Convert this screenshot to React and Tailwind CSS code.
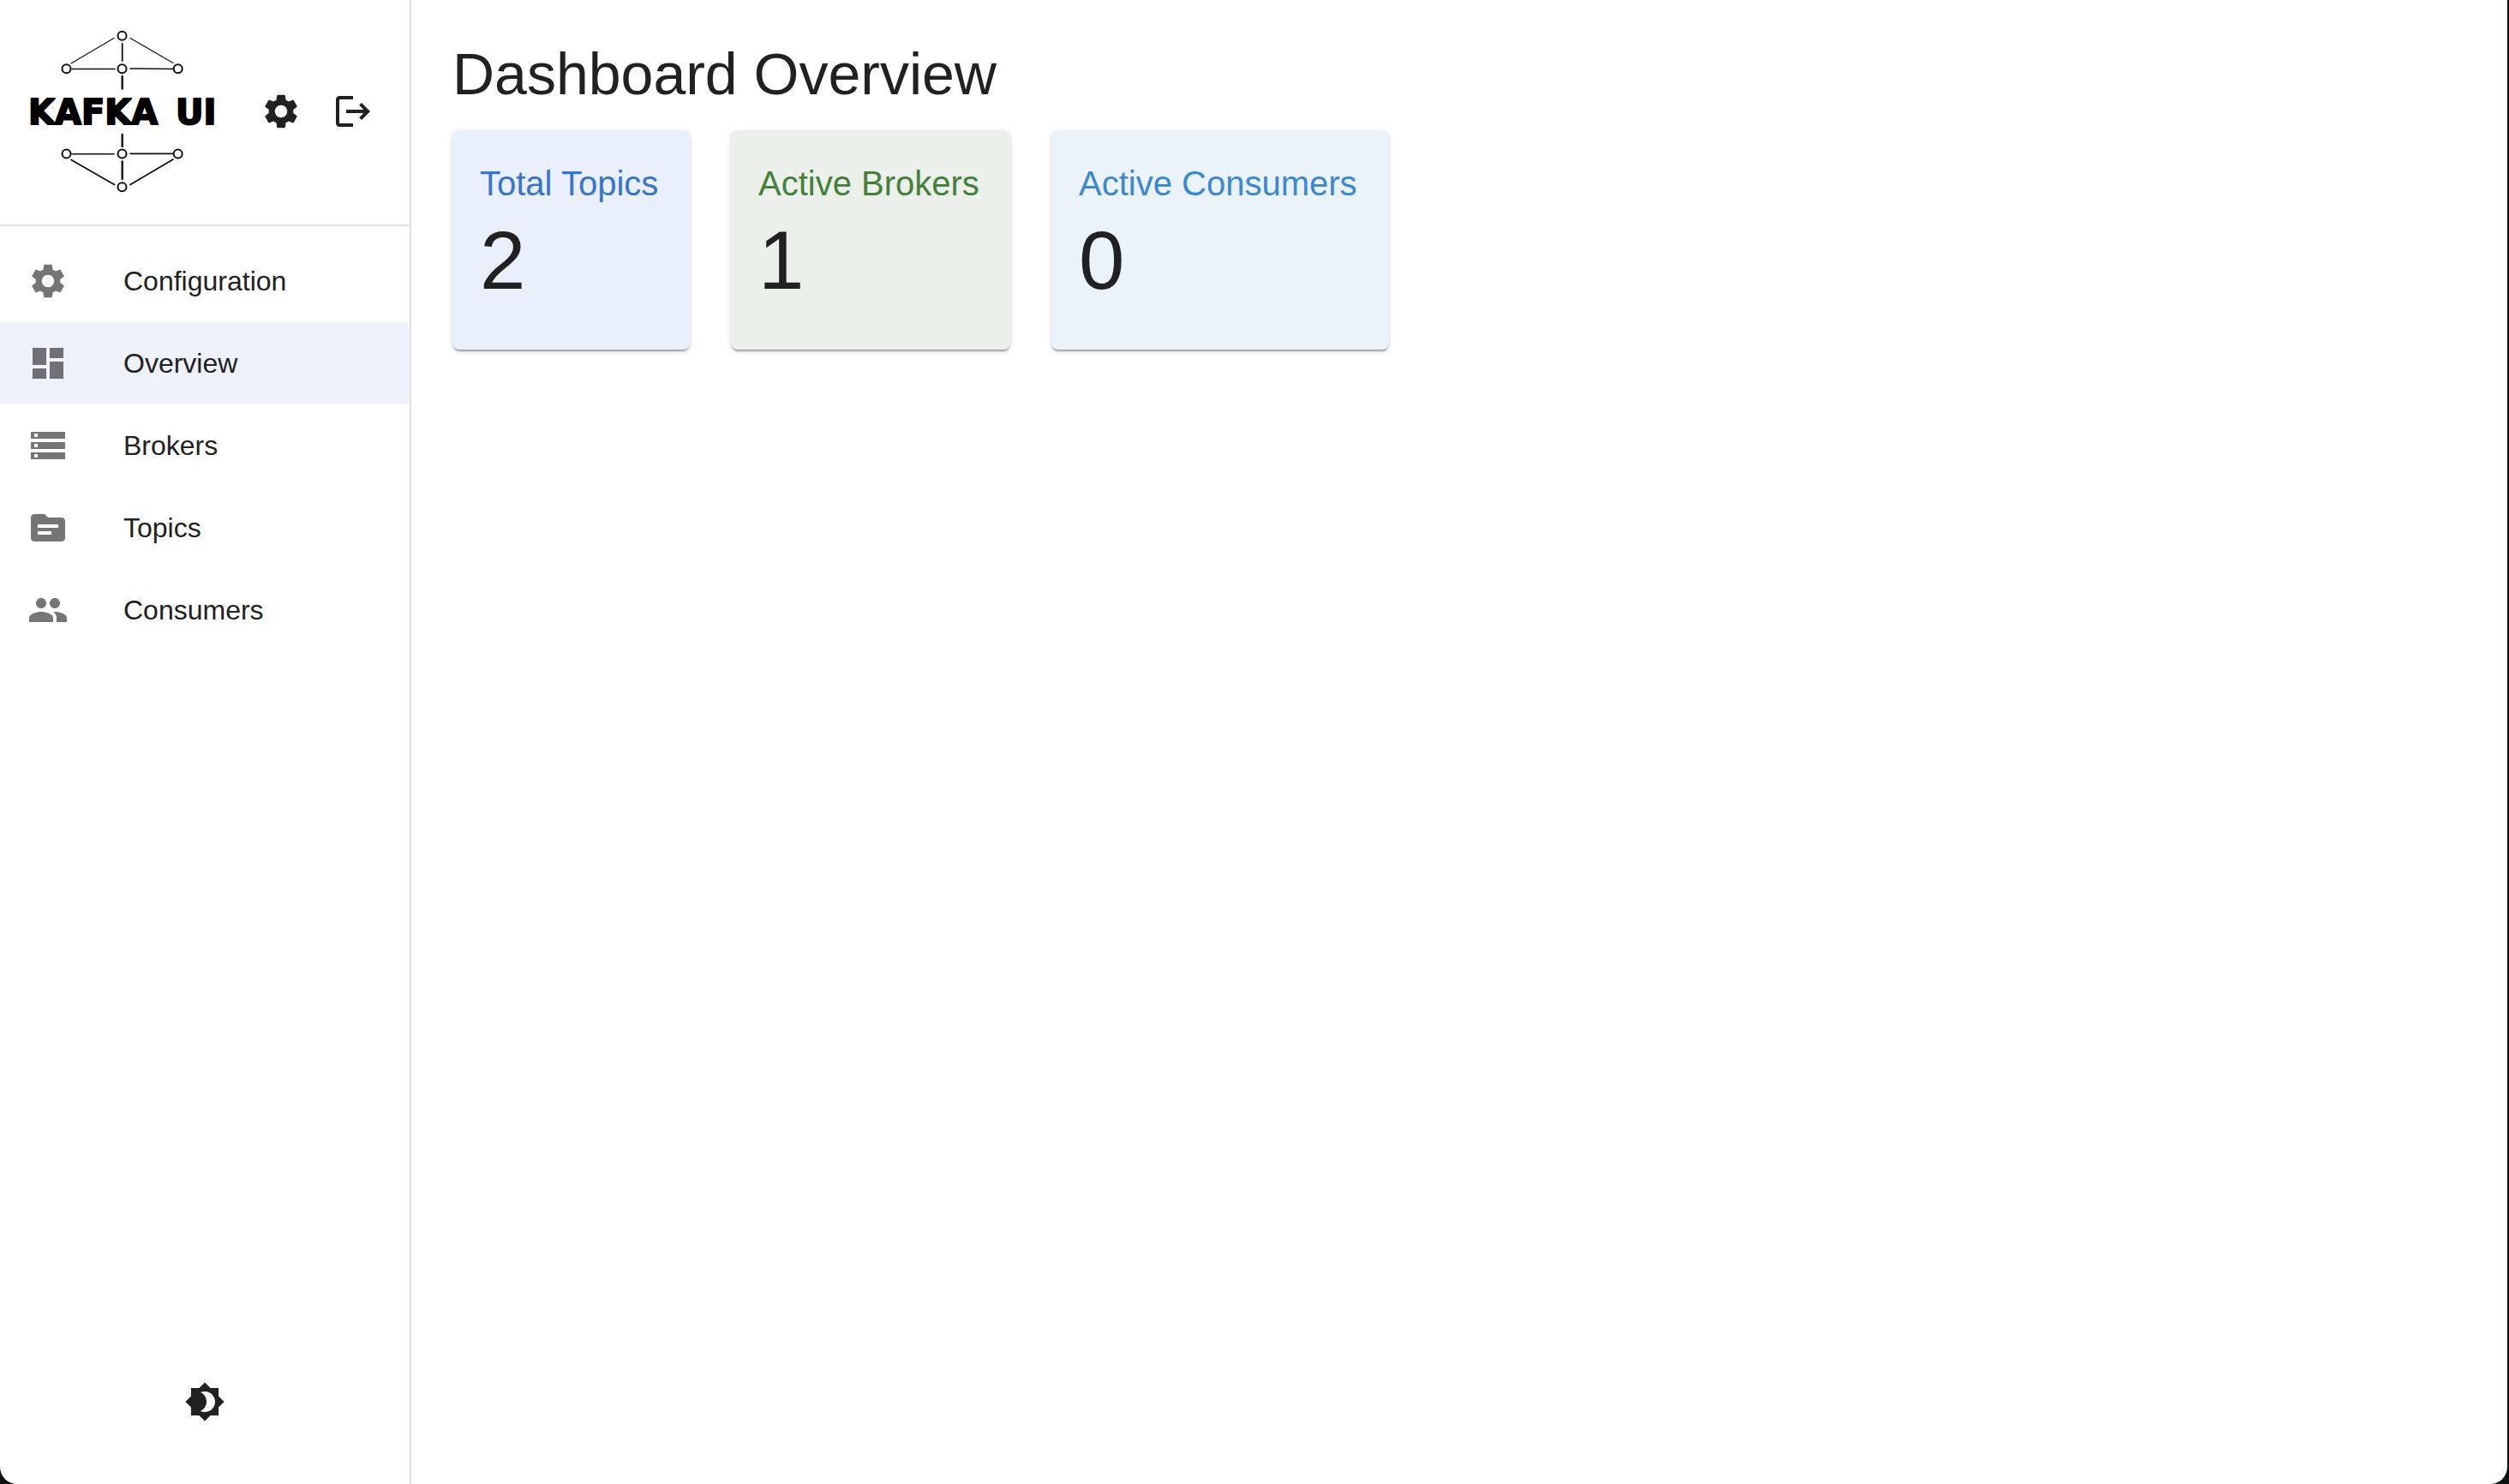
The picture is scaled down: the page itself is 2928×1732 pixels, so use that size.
import {
  MdBrightness4,
  MdDashboard,
  MdLogout,
  MdPeople,
  MdSettings,
  MdStorage,
  MdTopic,
} from "react-icons/md";

const navItems = [
  { label: "Configuration", icon: MdSettings },
  { label: "Overview", icon: MdDashboard, active: true },
  { label: "Brokers", icon: MdStorage },
  { label: "Topics", icon: MdTopic },
  { label: "Consumers", icon: MdPeople },
];

const stats = [
  { label: "Total Topics", value: 2, card: "min-w-[277px] bg-[#e9f0fb]", text: "text-[#3874cb]" },
  { label: "Active Brokers", value: 1, card: "min-w-[326px] bg-[#ebf0ea]", text: "text-[#44803a]" },
  { label: "Active Consumers", value: 0, card: "min-w-[394px] bg-[#eaf2fa]", text: "text-[#3b88d0]" },
];

const nodes = [
  [142.5, 41.7],
  [77.5, 80.3],
  [142.5, 80.3],
  [207.7, 80.3],
  [77.5, 179.5],
  [142.5, 179.5],
  [207.7, 179.5],
  [142.5, 218.3],
];

function Logo() {
  return (
    <svg viewBox="32 32 226 196" className="h-[196px] w-[226px] shrink-0" role="img" aria-label="Kafka UI">
      <g stroke="#111" strokeLinecap="round" fill="none">
        <path strokeWidth="1.2" d="M83 74 133 44.5M152 44.5 202 73.5" />
        <path strokeWidth="1.6" d="M84 80.5H134M152 80 202 80.5M84 179.7H133M152 179.4H202" />
        <path strokeWidth="1.8" d="M83 186.5 133.5 215.5M202 186 152 215.5M142.7 51V71" />
        <path strokeWidth="2.4" d="M142.7 89V103.5M142.7 157V171M142.7 188.5V209" />
        {nodes.map(([x, y]) => (
          <circle key={`${x}-${y}`} cx={x} cy={y} r="5" strokeWidth="2" />
        ))}
      </g>
      <g
        className="[font-kerning:none]"
        fontFamily="'DejaVu Sans', sans-serif"
        fontWeight="700"
        fontSize="40"
        fill="#000"
        stroke="#000"
        strokeWidth="2"
        strokeLinejoin="round"
      >
        <text x="33" y="145">KAFKA</text>
        <text x="205" y="145">UI</text>
      </g>
    </svg>
  );
}

function IconButton({ label, icon: Icon }) {
  return (
    <button type="button" aria-label={label} className="rounded-full p-4 text-[#212121]">
      <Icon className="size-12" />
    </button>
  );
}

function Sidebar() {
  return (
    <aside className="flex w-[480px] shrink-0 flex-col border-r-2 border-[#e0e0e0]">
      <div className="flex items-center justify-between border-b-2 border-[#e0e0e0] pt-8 pr-[26px] pb-[34px] pl-8">
        <Logo />
        <div className="flex gap-1">
          <IconButton label="Settings" icon={MdSettings} />
          <IconButton label="Log out" icon={MdLogout} />
        </div>
      </div>
      <nav className="py-4">
        <ul>
          {navItems.map(({ label, icon: Icon, active }) => (
            <li key={label}>
              <a
                href="#"
                aria-current={active ? "page" : undefined}
                className={`flex h-24 items-center gap-16 px-8 text-[32px] leading-[48px] ${active ? "bg-[#eef3fb]" : ""}`}
              >
                <Icon className={`size-12 ${active ? "text-[#6f7176]" : "text-[#757575]"}`} />
                {label}
              </a>
            </li>
          ))}
        </ul>
      </nav>
      <div className="mt-auto flex justify-center pb-14">
        <IconButton label="Toggle dark mode" icon={MdBrightness4} />
      </div>
    </aside>
  );
}

export default function App() {
  return (
    <div className="flex min-h-screen bg-[#0c1010] pr-0.5 font-['Liberation_Sans',Arial,sans-serif] text-[#212121]">
      <div className="flex flex-1 rounded-b-[20px] bg-white">
        <Sidebar />
        <main className="flex-1 px-12 pt-11">
          <h1 className="mb-6 text-[68px] leading-[84px]">Dashboard Overview</h1>
          <div className="flex flex-wrap gap-12">
            {stats.map(({ label, value, card, text }) => (
              <section
                key={label}
                className={`rounded-lg px-8 pt-8 pb-12 shadow-[0_4px_2px_-2px_rgba(0,0,0,0.2),0_2px_2px_0_rgba(0,0,0,0.14),0_2px_6px_0_rgba(0,0,0,0.12)] ${card}`}
              >
                <h2 className={`mb-1 text-[40px] leading-[60px] ${text}`}>{label}</h2>
                <p className="text-[96px] leading-[112px]">{value}</p>
              </section>
            ))}
          </div>
        </main>
      </div>
    </div>
  );
}
